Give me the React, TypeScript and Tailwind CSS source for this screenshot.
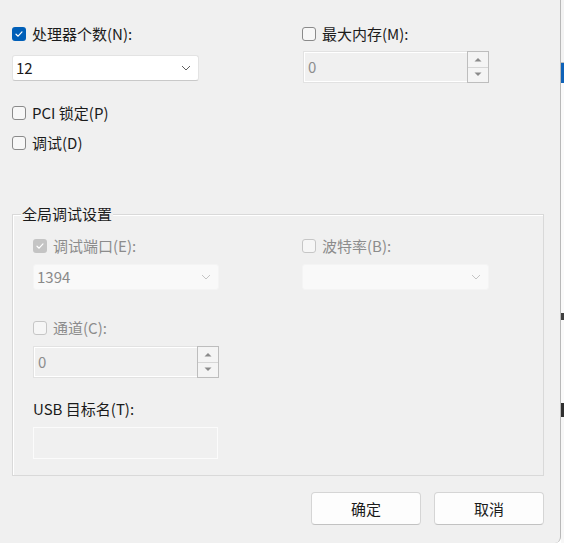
import React from "react";

const font = "font-['Noto_Sans_CJK_SC','Microsoft_YaHei',sans-serif]";

function Check({ checked = false, disabled = false }: { checked?: boolean; disabled?: boolean }) {
  if (checked) {
    return (
      <div
        className={`w-[14px] h-[14px] rounded-[3px] flex items-center justify-center shrink-0 ${
          disabled ? "bg-[#c4c4c4]" : "bg-[#005fb8]"
        }`}
      >
        <svg width="10" height="10" viewBox="0 0 10 10">
          <path d="M2 5.2 L4.1 7.2 L8 2.9" fill="none" stroke="white" strokeWidth="1.2" strokeLinecap="round" strokeLinejoin="round" />
        </svg>
      </div>
    );
  }
  return (
    <div
      className={`w-[14px] h-[14px] rounded-[3px] border shrink-0 ${
        disabled ? "border-[#c6c6c6] bg-[#f6f6f6]" : "border-[#8a8a8a] bg-[#f7f7f7]"
      }`}
    />
  );
}

function CheckRow({ label, checked, disabled }: { label: string; checked?: boolean; disabled?: boolean }) {
  return (
    <div className="flex items-center h-[20px] gap-[6px]">
      <Check checked={checked} disabled={disabled} />
      <span className={`text-[15px] leading-[20px] ${disabled ? "text-[#8c8c8c]" : "text-[#1b1b1b]"}`}>{label}</span>
    </div>
  );
}

function Chevron({ color }: { color: string }) {
  return (
    <svg width="10" height="6" viewBox="0 0 10 6">
      <path d="M1 1 L5 5 L9 1" fill="none" stroke={color} strokeWidth="1" />
    </svg>
  );
}

function Combo({ value, disabled, w }: { value: string; disabled?: boolean; w: string }) {
  return (
    <div
      className={`${w} h-[26px] rounded-[3px] flex items-center justify-between pl-[3px] pr-[7px] ${
        disabled
          ? "bg-[#f9f9f9] border border-[#f4f4f4]"
          : "bg-white border border-[#e3e3e3] border-b-[#c9c9c9]"
      }`}
    >
      <span className={`text-[15px] leading-[20px] ${disabled ? "text-[#8a8a8a]" : "text-[#1b1b1b]"}`}>{value}</span>
      <Chevron color={disabled ? "#c4c4c4" : "#606060"} />
    </div>
  );
}

function Spinner({ value, w }: { value: string; w: string }) {
  return (
    <div className={`${w} h-[32px] flex`}>
      <div className="flex-1 border border-[#e2e2e2] border-r-0 flex items-center">
        <div className="w-full h-full border border-white border-r-0 flex items-center pl-[3px]">
          <span className="text-[15px] leading-[20px] text-[#8d8d8d]">{value}</span>
        </div>
      </div>
      <div className="w-[22px] h-full border border-[#bdbdbd] flex flex-col">
        <div className="flex-1 border-b border-[#d6d6d6] bg-[#f4f4f4] flex items-center justify-center">
          <svg width="8" height="5" viewBox="0 0 8 5">
            <path d="M0.5 4.5 L4 1 L7.5 4.5 Z" fill="#8a8a8a" />
          </svg>
        </div>
        <div className="flex-1 bg-[#f4f4f4] flex items-center justify-center">
          <svg width="8" height="5" viewBox="0 0 8 5">
            <path d="M0.5 0.5 L4 4 L7.5 0.5 Z" fill="#8a8a8a" />
          </svg>
        </div>
      </div>
    </div>
  );
}

function Button({ label }: { label: string }) {
  return (
    <div className="w-[110px] h-[33px] rounded-[4px] bg-[#fdfdfd] border border-[#d5d5d5] border-b-[#c2c2c2] flex items-center justify-center">
      <span className="text-[15px] leading-[20px] text-[#1b1b1b]">{label}</span>
    </div>
  );
}

export default function App() {
  return (
    <div className={`w-[564px] h-[543px] flex overflow-hidden ${font}`}>
      <div className="w-[561px] h-full bg-[#f0f0f0] border-r border-[#b8b8b8] rounded-br-[6px] flex flex-col pt-[24px]">
        {/* top section */}
        <div className="grid grid-cols-[290px_1fr] pl-[12px]">
          <div className="flex flex-col">
            <CheckRow label="处理器个数(N):" checked />
            <div className="mt-[11px]">
              <Combo value="12" w="w-[187px]" />
            </div>
          </div>
          <div className="flex flex-col">
            <CheckRow label="最大内存(M):" />
            <div className="mt-[7px] pl-[1px]">
              <Spinner value="0" w="w-[186px]" />
            </div>
          </div>
        </div>

        <div className="pl-[12px] mt-[20px] flex flex-col gap-[10px]">
          <CheckRow label="PCI 锁定(P)" />
          <CheckRow label="调试(D)" />
        </div>

        {/* group box */}
        <div className="ml-[12px] mr-[16px] mt-[61px] h-[262px] border border-[#d9d9d9] shadow-[inset_1px_1px_0_#ffffff] relative">
          <span className="absolute left-[8px] top-[-11px] px-[1px] bg-[#f0f0f0] text-[15px] leading-[20px] text-[#1b1b1b]">
            全局调试设置
          </span>
          <div className="grid grid-cols-[269px_1fr] pl-[20px] pt-[21px]">
            <div className="flex flex-col">
              <CheckRow label="调试端口(E):" checked disabled />
              <div className="mt-[8px]">
                <Combo value="1394" w="w-[186px]" disabled />
              </div>
            </div>
            <div className="flex flex-col">
              <CheckRow label="波特率(B):" disabled />
              <div className="mt-[8px]">
                <Combo value="" w="w-[187px]" disabled />
              </div>
            </div>
          </div>
          <div className="pl-[20px] mt-[28px] flex flex-col">
            <CheckRow label="通道(C):" disabled />
            <div className="mt-[8px]">
              <Spinner value="0" w="w-[186px]" />
            </div>
            <div className="mt-[21px] h-[20px] flex items-center">
              <span className="text-[15px] leading-[20px] text-[#1b1b1b]">USB 目标名(T):</span>
            </div>
            <div className="mt-[8px] w-[185px] h-[32px] border border-[#fbfbfb] bg-[#f0f0f0]" />
          </div>
        </div>

        {/* buttons */}
        <div className="flex justify-end gap-[13px] pr-[16px] mt-[16px]">
          <Button label="确定" />
          <Button label="取消" />
        </div>
      </div>

      {/* background window sliver */}
      <div className="w-[3px] h-full flex flex-col bg-[#f5f5f5]">
        <div className="h-[62px] bg-[#f3f3f3]" />
        <div className="h-[1px] bg-[#bdbdbd]" />
        <div className="h-[20px] bg-[#0f62b8]" />
        <div className="h-[230px] bg-[#fafafa]" />
        <div className="h-[7px] bg-[#404040]" />
        <div className="h-[83px] bg-[#fafafa]" />
        <div className="h-[14px] bg-[#303030]" />
        <div className="flex-1 bg-[#f7f7f7]" />
      </div>
    </div>
  );
}
